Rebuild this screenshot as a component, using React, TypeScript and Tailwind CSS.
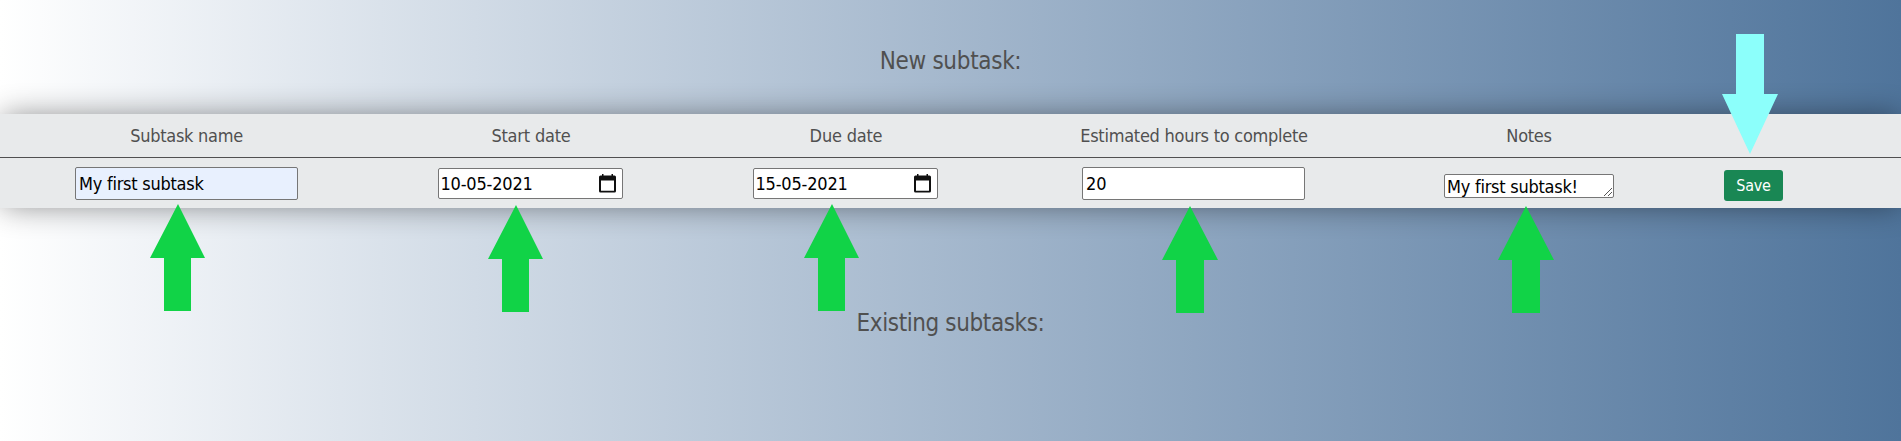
import React from "react";

function CalendarIcon() {
  return (
    <svg className="h-[19px] w-[17px] shrink-0" viewBox="0 0 17 19">
      <path
        fillRule="evenodd"
        fill="#101010"
        d="M1.5 1.500H3V0h1.500v1.500h8V0H14v1.500h1.500Q17 1.500 17 3v14Q17 18.500 15.500 18.500h-14Q0 18.500 0 17V3Q0 1.500 1.500 1.500zM2 6.500v10.300h13V6.500z"
      />
    </svg>
  );
}

function DateField({ value }: { value: string }) {
  return (
    <div className="mr-[2px] flex h-[31px] w-[185px] items-center rounded-[2px] border border-[#767676] bg-white pr-[6px] pl-[2px]">
      <span className="flex-1 text-left text-black tracking-[-0.2px]">{value}</span>
      <CalendarIcon />
    </div>
  );
}

function Arrow({ className, points, fill }: { className: string; points: string; fill: string }) {
  return (
    <svg className={`absolute ${className}`} aria-hidden="true">
      <polygon points={points} fill={fill} />
    </svg>
  );
}

const UP = "28,0 55,54 41,54 41,107 14,107 14,54 0,54";
const UP_WIDE = "28,0 56,54 42,54 42,107 14,107 14,54 0,54";
const DOWN = "14,0 42,0 42,60 56,60 28,120 0,60 14,60";
const COLUMNS = "grid grid-cols-[373px_316px_314px_382px_288px_162px] justify-items-center";

export default function App() {
  return (
    <div className="relative h-[441px] w-full overflow-hidden bg-linear-to-r from-white to-[#4f749b] font-['DejaVu_Sans_Condensed','DejaVu_Sans',sans-serif] text-[18px] text-[#505050] [font-stretch:condensed]">
      <h2 className="flex h-[114px] items-center justify-center pt-[8px] text-[24px]">
        <span className="tracking-[-0.3px]">New subtask:</span>
      </h2>
      <section className="h-[94px] bg-[#e8eaeb] shadow-[0_0_30px_-2px_rgba(0,0,0,0.45)]">
        <div className={`${COLUMNS} h-[44px] items-center border-b border-[#505050]`}>
          <span className="tracking-[-0.27px]">Subtask name</span>
          <span className="tracking-[-0.2px]">Start date</span>
          <span className="tracking-[-0.2px]">Due date</span>
          <span className="tracking-[-0.26px]">Estimated hours to complete</span>
          <span className="tracking-[-0.3px]">Notes</span>
        </div>
        <div className={`${COLUMNS} h-[50px] items-center text-black`}>
          <div className="flex h-[33px] w-[223px] items-center rounded-[2px] border border-[#767676] bg-[#e8f0fe] px-[3px]">
            <span className="tracking-[-0.25px]">My first subtask</span>
          </div>
          <DateField value="10-05-2021" />
          <DateField value="15-05-2021" />
          <div className="mr-px flex h-[33px] w-[223px] items-center rounded-[2px] border border-[#767676] bg-white px-[3px]">
            <span>20</span>
          </div>
          <div className="mt-[6px] flex h-[24px] w-[170px] items-center justify-between rounded-[2px] border border-[#767676] bg-white pl-[2px]">
            <span className="tracking-[-0.25px]">My first subtask!</span>
            <svg className="mr-px mb-px h-[8px] w-[8px] self-end" viewBox="0 0 8 8">
              <path d="M0 8L8 0M4 8l4-4" stroke="#555" strokeWidth="1" />
            </svg>
          </div>
          <button className="mt-[5px] mr-[2px] flex h-[31px] w-[59px] items-center justify-center rounded-[3px] bg-[#198754] pl-px text-[16px] text-white">
            <span className="tracking-[-0.25px]">Save</span>
          </button>
        </div>
      </section>
      <h2 className="flex h-[229px] justify-center pt-[97px] text-[24px]">
        <span className="tracking-[-0.4px]">Existing subtasks:</span>
      </h2>

      <Arrow className="top-[204px] left-[150px] h-[107px] w-[56px]" points={UP} fill="#11d347" />
      <Arrow className="top-[205px] left-[488px] h-[107px] w-[56px]" points={UP} fill="#11d347" />
      <Arrow className="top-[204px] left-[804px] h-[107px] w-[56px]" points={UP} fill="#11d347" />
      <Arrow className="top-[206px] left-[1162px] h-[107px] w-[56px]" points={UP_WIDE} fill="#11d347" />
      <Arrow className="top-[206px] left-[1498px] h-[107px] w-[56px]" points={UP_WIDE} fill="#11d347" />
      <Arrow className="top-[34px] left-[1722px] h-[120px] w-[56px]" points={DOWN} fill="#8cfffb" />
    </div>
  );
}
